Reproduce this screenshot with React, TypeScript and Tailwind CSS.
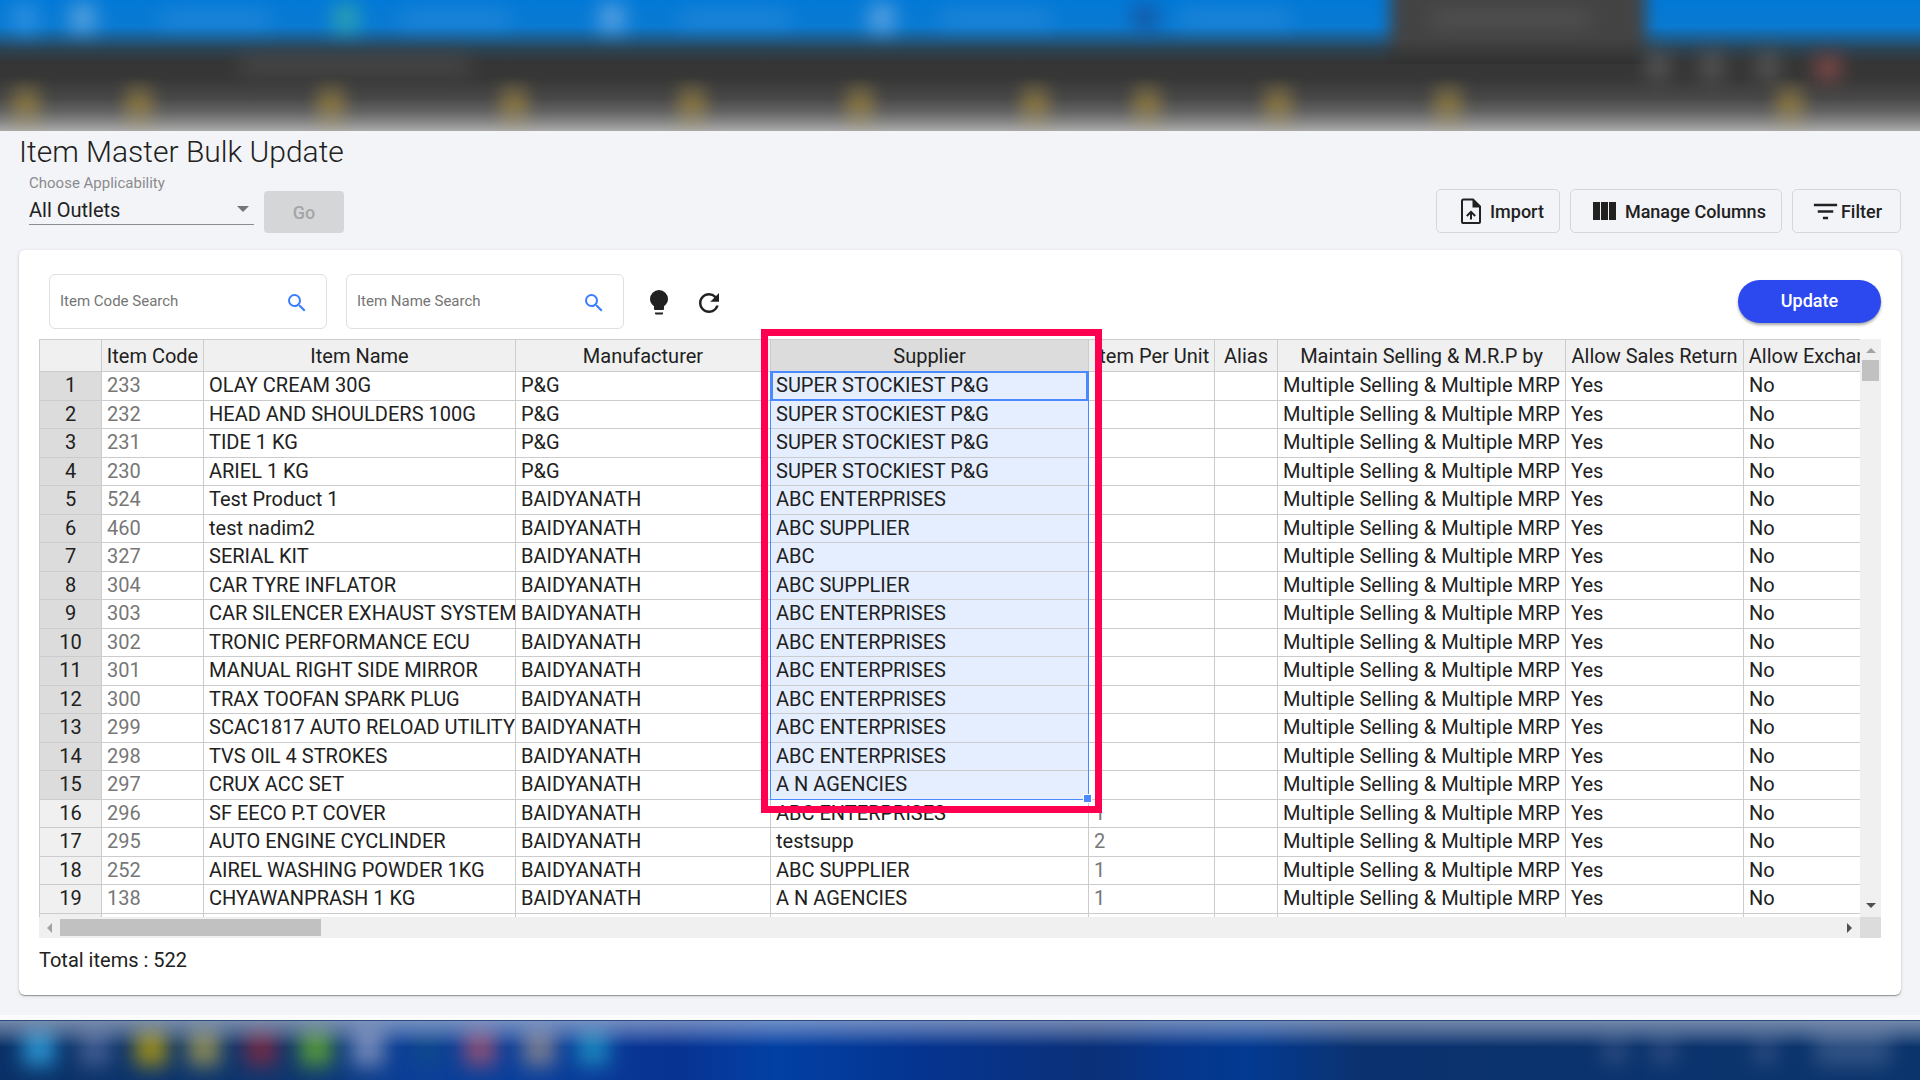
import { ReactNode, useState } from "react";
import { MdFilterList, MdRefresh, MdSearch } from "react-icons/md";

const COLUMNS = [
  { title: "Item Code", width: "w-[102px]" },
  { title: "Item Name", width: "w-[312px]" },
  { title: "Manufacturer", width: "w-[255px]" },
  { title: "Supplier", width: "w-[318px]" },
  { title: "Item Per Unit", width: "w-[126px]" },
  { title: "Alias", width: "w-[63px]" },
  { title: "Maintain Selling & M.R.P by", width: "w-[288px]" },
  { title: "Allow Sales Return", width: "w-[178px]" },
  { title: "Allow Exchange", width: "w-[151px]" },
];

const SUPPLIER_COLUMN = 3;
const SELECTED_ROWS = 15;

const ITEMS = [
  { code: "233", name: "OLAY CREAM 30G", maker: "P&G", supplier: "SUPER STOCKIEST P&G", perUnit: "" },
  { code: "232", name: "HEAD AND SHOULDERS 100G", maker: "P&G", supplier: "SUPER STOCKIEST P&G", perUnit: "" },
  { code: "231", name: "TIDE 1 KG", maker: "P&G", supplier: "SUPER STOCKIEST P&G", perUnit: "" },
  { code: "230", name: "ARIEL 1 KG", maker: "P&G", supplier: "SUPER STOCKIEST P&G", perUnit: "" },
  { code: "524", name: "Test Product 1", maker: "BAIDYANATH", supplier: "ABC ENTERPRISES", perUnit: "" },
  { code: "460", name: "test nadim2", maker: "BAIDYANATH", supplier: "ABC SUPPLIER", perUnit: "" },
  { code: "327", name: "SERIAL KIT", maker: "BAIDYANATH", supplier: "ABC", perUnit: "" },
  { code: "304", name: "CAR TYRE INFLATOR", maker: "BAIDYANATH", supplier: "ABC SUPPLIER", perUnit: "" },
  { code: "303", name: "CAR SILENCER EXHAUST SYSTEM", maker: "BAIDYANATH", supplier: "ABC ENTERPRISES", perUnit: "" },
  { code: "302", name: "TRONIC PERFORMANCE ECU", maker: "BAIDYANATH", supplier: "ABC ENTERPRISES", perUnit: "" },
  { code: "301", name: "MANUAL RIGHT SIDE MIRROR", maker: "BAIDYANATH", supplier: "ABC ENTERPRISES", perUnit: "" },
  { code: "300", name: "TRAX TOOFAN SPARK PLUG", maker: "BAIDYANATH", supplier: "ABC ENTERPRISES", perUnit: "" },
  { code: "299", name: "SCAC1817 AUTO RELOAD UTILITY", maker: "BAIDYANATH", supplier: "ABC ENTERPRISES", perUnit: "" },
  { code: "298", name: "TVS OIL 4 STROKES", maker: "BAIDYANATH", supplier: "ABC ENTERPRISES", perUnit: "" },
  { code: "297", name: "CRUX ACC SET", maker: "BAIDYANATH", supplier: "A N AGENCIES", perUnit: "" },
  { code: "296", name: "SF EECO P.T COVER", maker: "BAIDYANATH", supplier: "ABC ENTERPRISES", perUnit: "1" },
  { code: "295", name: "AUTO ENGINE CYCLINDER", maker: "BAIDYANATH", supplier: "testsupp", perUnit: "2" },
  { code: "252", name: "AIREL WASHING POWDER 1KG", maker: "BAIDYANATH", supplier: "ABC SUPPLIER", perUnit: "1" },
  { code: "138", name: "CHYAWANPRASH 1 KG", maker: "BAIDYANATH", supplier: "A N AGENCIES", perUnit: "1" },
];

export default function App() {
  return (
    <div className="flex min-h-screen flex-col bg-[#f3f4f7] font-[Roboto,sans-serif] text-[#212121]">
      <BrowserStrip />
      <main className="flex grow flex-col px-[19px] pb-5">
        <PageHeader />
        <section className="mt-[17px] grow rounded-md bg-white px-5 pt-6 shadow-[0_1px_1px_rgba(0,0,0,0.35),0_1px_4px_rgba(0,0,0,0.12)]">
          <Toolbar />
          <ItemGrid />
          <p className="mt-2 text-[20px] leading-7">Total items : 522</p>
        </section>
      </main>
      <div className="h-[5px] bg-[#fbfbfb]" />
      <Taskbar />
    </div>
  );
}

function PageHeader() {
  const [outlet, setOutlet] = useState("all");

  return (
    <header>
      <h1 className="pt-0.5 text-[30px] leading-[38px] font-light">Item Master Bulk Update</h1>
      <div className="flex items-end justify-between">
        <div className="flex items-end gap-2.5 pl-2.5">
          <div className="w-[225px] pb-2">
            <label htmlFor="outlet" className="block text-[15px] leading-6 text-[#8b8b8d]">
              Choose Applicability
            </label>
            <div className="relative border-b border-[#8c8c8e] pb-px">
              <select
                id="outlet"
                value={outlet}
                onChange={(e) => setOutlet(e.target.value)}
                className="block h-7 w-full appearance-none bg-transparent pt-0.5 text-[20px] leading-[26px] outline-none"
              >
                <option value="all">All Outlets</option>
              </select>
              <svg viewBox="0 0 12 6" className="pointer-events-none absolute top-[11px] right-[5px] h-1.5 w-3" fill="#757575">
                <path d="M0 0h12L6 6z" />
              </svg>
            </div>
          </div>
          <button disabled className="h-[42px] w-20 rounded bg-[#d5d6d8] text-[18px] font-medium text-[#a4a5a7]">
            Go
          </button>
        </div>
        <div className="flex gap-2.5">
          <HeaderButton className="gap-2 pr-[15px] pl-[23px]">
            <FileUploadIcon />
            Import
          </HeaderButton>
          <HeaderButton className="gap-2 pr-[15px] pl-[22px]">
            <ColumnsIcon />
            Manage Columns
          </HeaderButton>
          <HeaderButton className="pr-[18px] pl-[17px]">
            <MdFilterList className="size-[31px]" />
            Filter
          </HeaderButton>
        </div>
      </div>
    </header>
  );
}

function HeaderButton({ className, children }: { className: string; children: ReactNode }) {
  return (
    <button className={`flex h-11 items-center rounded-[5px] border border-[#d6d7da] text-[18px] font-medium ${className}`}>
      {children}
    </button>
  );
}

function Toolbar() {
  return (
    <div className="flex items-center justify-between pl-2.5">
      <div className="flex items-center">
        <SearchBox label="Item Code Search" />
        <div className="w-[19px]" />
        <SearchBox label="Item Name Search" />
        <button aria-label="Hints" className="ml-5 pt-0.5">
          <BulbIcon />
        </button>
        <button aria-label="Refresh" className="ml-5 pt-0.5">
          <MdRefresh className="size-[30px]" />
        </button>
      </div>
      <button className="h-[43px] w-[143px] rounded-full bg-[#2c48ef] pb-0.5 text-[18px] font-medium text-white shadow-[0_2px_3px_rgba(0,0,0,0.35)]">
        Update
      </button>
    </div>
  );
}

function SearchBox({ label }: { label: string }) {
  return (
    <div className="flex h-[55px] w-[278px] items-center rounded-md border border-[#e0e0e0] pr-[17px] pl-2.5">
      <input
        type="text"
        aria-label={label}
        placeholder={label}
        className="w-full min-w-0 text-[15px] outline-none placeholder:text-[#757575]"
      />
      <MdSearch className="mt-0.5 size-6 shrink-0 text-[#3b7cff]" />
    </div>
  );
}

function ItemGrid() {
  return (
    <div className="mt-2.5 grid grid-cols-[1fr_21px] grid-rows-[auto_21px]">
      <div className="relative min-w-0">
        <div className="h-[578px] overflow-hidden">
          <table className="w-[1856px] table-fixed border-separate border-spacing-0 border-t border-l border-[#cccccc] text-[20px] leading-[26px] whitespace-nowrap">
            <thead>
              <tr className="h-8">
                <th className="w-[62px] border-r border-b border-[#cccccc] bg-[#f0f0f0]" />
                {COLUMNS.map((column, i) => (
                  <th
                    key={column.title}
                    className={`${column.width} border-r border-b border-[#cccccc] p-0 font-normal ${
                      i === SUPPLIER_COLUMN ? "bg-[#dcdcdc]" : "bg-[#f0f0f0]"
                    }`}
                  >
                    {column.title}
                  </th>
                ))}
              </tr>
            </thead>
            <tbody>
              {ITEMS.map((item, i) => (
                <tr key={item.code} className="h-7 align-top odd:h-[29px]">
                  <th
                    className={`border-r border-b border-[#cccccc] p-0 font-normal ${
                      i < SELECTED_ROWS ? "bg-[#dcdcdc]" : "bg-[#f0f0f0]"
                    }`}
                  >
                    {i + 1}
                  </th>
                  <Cell muted>{item.code}</Cell>
                  <Cell>{item.name}</Cell>
                  <Cell>{item.maker}</Cell>
                  <Cell selected={i < SELECTED_ROWS}>{item.supplier}</Cell>
                  <Cell muted>{item.perUnit}</Cell>
                  <Cell />
                  <Cell>Multiple Selling & Multiple MRP</Cell>
                  <Cell>Yes</Cell>
                  <Cell>No</Cell>
                </tr>
              ))}
              <tr className="h-7">
                <th className="border-r border-[#cccccc] bg-[#f0f0f0] p-0" />
                {COLUMNS.map((column) => (
                  <td key={column.title} className="border-r border-[#cccccc] p-0" />
                ))}
              </tr>
            </tbody>
          </table>
        </div>

        {/* Range selection, active cell and the marker frame around the column */}
        <div className="pointer-events-none absolute top-8 left-[731px] h-[429px] w-[319px] border border-[#4b89ff]">
          <div className="h-[29px] border-x-2 border-t border-b-2 border-[#4b89ff]" />
          <div className="absolute -right-1 -bottom-1 size-[9px] border border-white bg-[#4b89ff]" />
        </div>
        <div className="pointer-events-none absolute -top-2.5 left-[722px] h-[484px] w-[341px] border-[7px] border-[#ff0050]" />
      </div>

      <div className="flex flex-col items-center bg-[#f0f0f0]">
        <svg viewBox="0 0 10 5" className="mt-[9px] h-[5px] w-2.5" fill="#a3a3a3">
          <path d="M0 5h10L5 0z" />
        </svg>
        <div className="mt-[7px] h-[21px] w-[17px] bg-[#c1c1c1]" />
        <svg viewBox="0 0 10 5" className="mt-auto mb-[9px] h-[5px] w-2.5" fill="#505050">
          <path d="M0 0h10L5 5z" />
        </svg>
      </div>

      <div className="flex items-center bg-[#f0f0f0]">
        <svg viewBox="0 0 5 10" className="ml-2 h-2.5 w-[5px]" fill="#a3a3a3">
          <path d="M5 0v10L0 5z" />
        </svg>
        <div className="ml-2 h-[17px] w-[261px] bg-[#c1c1c1]" />
        <svg viewBox="0 0 5 10" className="mr-2 ml-auto h-2.5 w-[5px]" fill="#505050">
          <path d="M0 0v10l5-5z" />
        </svg>
      </div>
      <div className="bg-[#dcdcdc]" />
    </div>
  );
}

interface CellProps {
  muted?: boolean;
  selected?: boolean;
  children?: ReactNode;
}

function Cell({ muted, selected, children }: CellProps) {
  return (
    <td
      className={`overflow-hidden border-r border-b border-[#cccccc] py-0 pr-0 pl-[5px] ${muted ? "text-[#777777]" : ""} ${
        selected ? "bg-[#e5eeff]" : ""
      }`}
    >
      {children}
    </td>
  );
}

function FileUploadIcon() {
  return (
    <svg viewBox="0 0 22 26" className="h-[26px] w-[22px]">
      <path d="M3.500 1.500h9.500l7 7v15.500a1 1 0 0 1-1 1H3a1 1 0 0 1-1-1V3a1.500 1.500 0 0 1 1.500-1.500z" fill="none" stroke="#212121" strokeWidth="2" />
      <path d="M12.500 1v8.500h8z" fill="#212121" />
      <path d="M11 13.500v8M6.800 18l4.200-4.200 4.200 4.200" fill="none" stroke="#212121" strokeWidth="2" />
    </svg>
  );
}

function ColumnsIcon() {
  return (
    <svg viewBox="0 0 24 18" className="h-[18px] w-6" fill="#212121">
      <path d="M0 0h7v18H0zM8 0h7v18H8zM16 0h7v18h-7z" />
    </svg>
  );
}

function BulbIcon() {
  return (
    <svg viewBox="0 0 30 30" className="size-[30px]" fill="#212121">
      <path d="M15 2a9 9 0 0 0-9 9c0 3 1.600 5.500 4 7.300V21a1 1 0 0 0 1 1h8a1 1 0 0 0 1-1v-2.700c2.400-1.800 4-4.300 4-7.300a9 9 0 0 0-9-9z" />
      <path d="M11 24.500h8v1a1 1 0 0 1-1 1h-6a1 1 0 0 1-1-1z" />
    </svg>
  );
}

const TAB_GLOWS = [
  { x: 25, color: "#3f9be6" },
  { x: 83, color: "#7fb4df" },
  { x: 346, color: "#3fb5a0" },
  { x: 612, color: "#7fb4e6" },
  { x: 882, color: "#7fb4e6" },
  { x: 1145, color: "#1a4a90" },
];

const BOOKMARKS = [26, 139, 331, 514, 692, 860, 1035, 1147, 1278, 1448, 1790];

// Out-of-focus browser chrome above the page
function BrowserStrip() {
  return (
    <svg viewBox="0 0 1920 131" preserveAspectRatio="none" className="block h-[131px] w-full shrink-0" aria-hidden="true">
      <defs>
        <linearGradient id="chrome" x1="0" y1="0" x2="0" y2="1">
          <stop offset="0" stopColor="#0279d7" />
          <stop offset="0.200" stopColor="#0a7ad2" />
          <stop offset="0.290" stopColor="#1c5f92" />
          <stop offset="0.380" stopColor="#2c4252" />
          <stop offset="0.480" stopColor="#353535" />
          <stop offset="0.600" stopColor="#373737" />
          <stop offset="0.750" stopColor="#484848" />
          <stop offset="0.850" stopColor="#636363" />
          <stop offset="0.930" stopColor="#868686" />
          <stop offset="1" stopColor="#ababac" />
        </linearGradient>
        <linearGradient id="tab" x1="0" y1="0" x2="0" y2="1">
          <stop offset="0" stopColor="#434343" />
          <stop offset="0.600" stopColor="#434343" />
          <stop offset="1" stopColor="#303030" />
        </linearGradient>
        <linearGradient id="bookmark" x1="0" y1="0" x2="0" y2="1">
          <stop offset="0" stopColor="#8a7640" stopOpacity="0" />
          <stop offset="0.500" stopColor="#8a7640" stopOpacity="0.850" />
          <stop offset="1" stopColor="#b5a67c" stopOpacity="0.200" />
        </linearGradient>
        <filter id="soft" x="-150%" y="-150%" width="400%" height="400%" colorInterpolationFilters="sRGB">
          <feGaussianBlur stdDeviation="10" />
        </filter>
        <filter id="edge" x="-100%" y="-20%" width="300%" height="140%" colorInterpolationFilters="sRGB">
          <feGaussianBlur stdDeviation="8 0" />
        </filter>
      </defs>
      <rect width="1920" height="131" fill="url(#chrome)" />
      <rect x="1390" y="0" width="256" height="64" fill="url(#tab)" filter="url(#edge)" />
      <rect x="1430" y="12" width="160" height="14" fill="#5c5c5c" opacity="0.700" filter="url(#soft)" />
      {TAB_GLOWS.map((glow) => (
        <rect key={glow.x} x={glow.x - 12} y="4" width="24" height="28" fill={glow.color} opacity="0.700" filter="url(#soft)" />
      ))}
      {[160, 400, 680, 940, 1180].map((x) => (
        <rect key={x} x={x} y="10" width="110" height="16" fill="#3a93dd" opacity="0.500" filter="url(#soft)" />
      ))}
      <rect x="240" y="56" width="230" height="18" fill="#555555" opacity="0.600" filter="url(#soft)" />
      {[1658, 1712, 1768].map((x) => (
        <rect key={x} x={x - 10} y="52" width="20" height="28" fill="#707070" opacity="0.600" filter="url(#soft)" />
      ))}
      <rect x="1816" y="56" width="24" height="24" fill="#9a5050" opacity="0.800" filter="url(#soft)" />
      {BOOKMARKS.map((x) => (
        <rect key={x} x={x - 14} y="76" width="28" height="55" fill="url(#bookmark)" filter="url(#edge)" />
      ))}
    </svg>
  );
}

const TASKBAR_APPS = [
  { x: 39, color: "#2a90cc" },
  { x: 95, color: "#405c90" },
  { x: 151, color: "#9a8c1e" },
  { x: 204, color: "#8a8a58" },
  { x: 261, color: "#702c48" },
  { x: 316, color: "#56983c" },
  { x: 368, color: "#7288b8" },
  { x: 428, color: "#10488c" },
  { x: 480, color: "#885078" },
  { x: 539, color: "#787c90" },
  { x: 593, color: "#1c84bc" },
];

// Out-of-focus desktop taskbar below the page
function Taskbar() {
  return (
    <svg viewBox="0 0 1920 60" preserveAspectRatio="none" className="block h-[60px] w-full shrink-0" aria-hidden="true">
      <defs>
        <linearGradient id="bar" x1="0" y1="0" x2="1" y2="0">
          <stop offset="0" stopColor="#0a3168" />
          <stop offset="0.160" stopColor="#0e3770" />
          <stop offset="0.210" stopColor="#0b3f98" />
          <stop offset="0.280" stopColor="#0a3f9c" />
          <stop offset="0.350" stopColor="#083392" />
          <stop offset="0.405" stopColor="#0240a4" />
          <stop offset="0.480" stopColor="#053490" />
          <stop offset="0.570" stopColor="#0a3078" />
          <stop offset="0.610" stopColor="#06368c" />
          <stop offset="0.650" stopColor="#033a92" />
          <stop offset="0.710" stopColor="#0b326e" />
          <stop offset="1" stopColor="#0b346c" />
        </linearGradient>
        <linearGradient id="sheen" x1="0" y1="0" x2="0" y2="1">
          <stop offset="0" stopColor="#e8e8f0" stopOpacity="0.480" />
          <stop offset="0.200" stopColor="#e0e0ea" stopOpacity="0.300" />
          <stop offset="0.450" stopColor="#e0e0ea" stopOpacity="0" />
        </linearGradient>
        <filter id="blur" x="-100%" y="-100%" width="300%" height="300%" colorInterpolationFilters="sRGB">
          <feGaussianBlur stdDeviation="10" />
        </filter>
      </defs>
      <rect width="1920" height="60" fill="url(#bar)" />
      {TASKBAR_APPS.map((app) => (
        <rect key={app.x} x={app.x - 16} y="10" width="32" height="36" fill={app.color} filter="url(#blur)" />
      ))}
      {[1615, 1664, 1765].map((x) => (
        <rect key={x} x={x - 12} y="18" width="24" height="26" fill="#3a5688" opacity="0.700" filter="url(#blur)" />
      ))}
      <rect x="1815" y="10" width="75" height="36" fill="#3a5a8a" opacity="0.800" filter="url(#blur)" />
      <rect width="1920" height="60" fill="url(#sheen)" />
      <rect width="1920" height="1" fill="#2c4a7c" />
    </svg>
  );
}
